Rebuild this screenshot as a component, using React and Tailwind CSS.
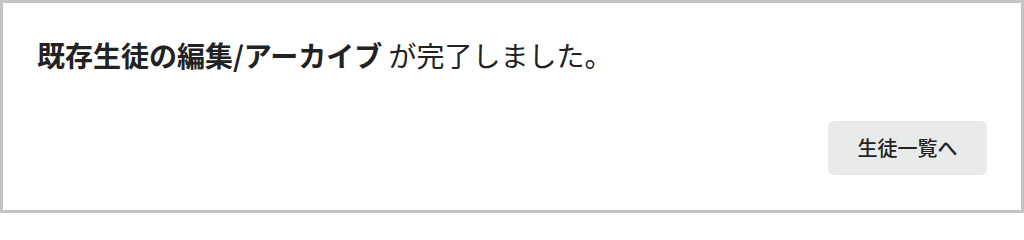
export default function App() {
  return (
    <div
      className="w-[1024px] h-[213px] border-[3px] border-[#c4c4c4] bg-white flex flex-col justify-between px-[34px] pt-[30px] pb-[35px] text-[#222]"
      style={{ fontFamily: '"Noto Sans CJK JP", "Noto Sans", sans-serif' }}
    >
      <p className="text-[28px] leading-[44px]">
        <span className="font-bold">既存生徒の編集/アーカイブ</span> が完了しました。
      </p>
      <div className="flex justify-end">
        <button className="w-[159px] h-[54px] rounded-[6px] bg-[#e9eaea] text-[20px] font-medium text-[#222] flex items-center justify-center">
          生徒一覧へ
        </button>
      </div>
    </div>
  );
}
